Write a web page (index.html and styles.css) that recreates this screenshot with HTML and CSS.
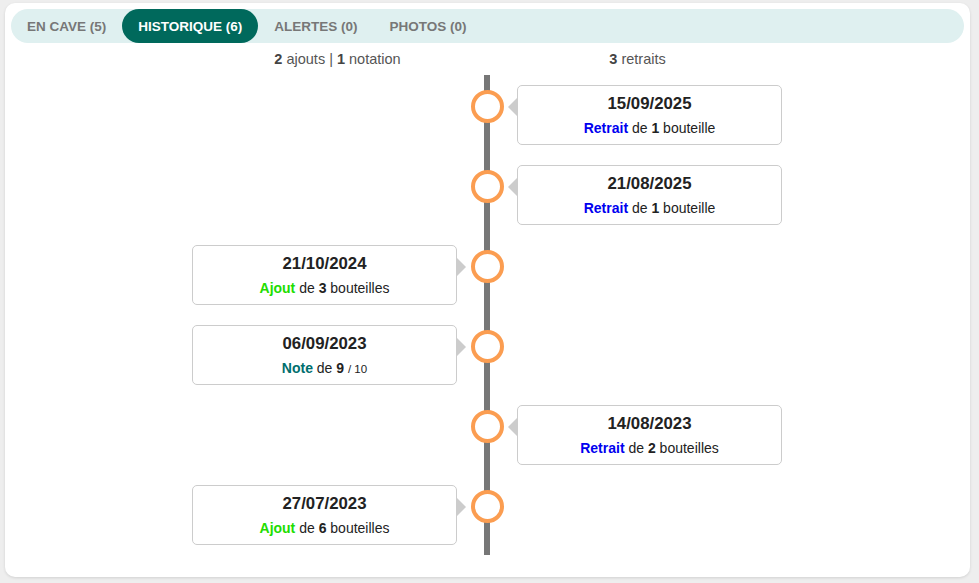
FILE: index.html
```html
<!DOCTYPE html>
<html>
<head>
    <meta charset="UTF-8" />
    <title>HISTORIQUE</title>
    <link rel="stylesheet" href="styles.css">
</head>
<body>
    <div class="panel">
      <div class="tabs">
        <a href="#">EN CAVE (5)</a>
        <a href="#" class="active">HISTORIQUE (6)</a>
        <a href="#">ALERTES (0)</a>
        <a href="#">PHOTOS (0)</a>
      </div>

      <div class="summary">
        <div><b>2</b> ajouts | <b>1</b> notation</div>
        <div><b>3</b> retraits</div>
      </div>

      <div class="timeline">
        <div class="item right">
          <div class="dot"></div>
          <div class="event">
            <div class="date">15/09/2025</div>
            <div class="what"><span class="out">Retrait</span> de <b>1</b> bouteille</div>
          </div>
        </div>
        <div class="item right">
          <div class="dot"></div>
          <div class="event">
            <div class="date">21/08/2025</div>
            <div class="what"><span class="out">Retrait</span> de <b>1</b> bouteille</div>
          </div>
        </div>
        <div class="item left">
          <div class="event">
            <div class="date">21/10/2024</div>
            <div class="what"><span class="in">Ajout</span> de <b>3</b> bouteilles</div>
          </div>
          <div class="dot"></div>
        </div>
        <div class="item left">
          <div class="event">
            <div class="date">06/09/2023</div>
            <div class="what"><span class="note">Note</span> de <b>9</b> <small>/ 10</small></div>
          </div>
          <div class="dot"></div>
        </div>
        <div class="item right">
          <div class="dot"></div>
          <div class="event">
            <div class="date">14/08/2023</div>
            <div class="what"><span class="out">Retrait</span> de <b>2</b> bouteilles</div>
          </div>
        </div>
        <div class="item left">
          <div class="event">
            <div class="date">27/07/2023</div>
            <div class="what"><span class="in">Ajout</span> de <b>6</b> bouteilles</div>
          </div>
          <div class="dot"></div>
        </div>
      </div>
    </div>
</body>
</html>
```

FILE: styles.css
```css
body {
  margin: 0;
  background-color: #eeeeee;
  font-family: "Liberation Sans", Arial, sans-serif;
  color: #222;
}

.panel {
  background-color: #fff;
  margin: 3px 9px 6px 5px;
  height: 574px;
  box-sizing: border-box;
  border-radius: 10px;
  box-shadow: 0 1px 3px rgba(0, 0, 0, 0.12);
  padding: 6px 7px 0 6px;
}

/* tabs */
.tabs {
  display: flex;
  background-color: #dff0f0;
  border-radius: 17px;
  height: 34px;
  margin-right: -1px;
}

.tabs a {
  display: flex;
  align-items: center;
  padding: 0 16px;
  border-radius: 17px;
  font-size: 13.5px;
  font-weight: bold;
  color: #777;
  text-decoration: none;
}

.tabs a.active {
  background-color: #00695c;
  color: #fff;
}

/* counts above the line */
.summary {
  display: flex;
  justify-content: center;
  font-size: 14.5px;
  color: #555;
  height: 32px;
  align-items: center;
  padding-left: 1px;
}

.summary div {
  width: 300px;
  text-align: center;
}

.summary b {
  color: #444;
}

/* timeline */
.timeline {
  width: 590px;
  margin: 0 auto;
  padding: 10px 0;
  background: linear-gradient(#777, #777) no-repeat center / 6px 100%;
}

.item {
  display: flex;
  align-items: flex-start;
  height: 60px;
  margin-bottom: 20px;
}

.item:last-child {
  margin-bottom: 0;
}

.item.right {
  padding-left: 279px;
}

.dot {
  width: 25px;
  height: 25px;
  border: 4px solid #fb9d51;
  border-radius: 50%;
  background-color: #fff;
  margin: 5px 14px 0 14px;
}

.item.right .dot {
  margin-left: 0;
  margin-right: 13px;
}

.item.left .dot {
  margin-right: 0;
}

.event {
  position: relative;
  width: 263px;
  height: 58px;
  border: 1px solid #ccc;
  border-radius: 5px;
  background-color: #fff;
  text-align: center;
}

.event::before {
  content: "";
  position: absolute;
  top: 12px;
  border-top: 9px solid transparent;
  border-bottom: 9px solid transparent;
}

.item.right .event::before {
  left: -10px;
  border-right: 9px solid #ccc;
}

.item.left .event::before {
  right: -10px;
  border-left: 9px solid #ccc;
}

.date {
  font-size: 16.8px;
  font-weight: bold;
  margin-top: 8px;
}

.what {
  font-size: 14px;
  margin-top: 6px;
}

.out {
  color: #0000f0;
  font-weight: bold;
}

.in {
  color: #22dd00;
  font-weight: bold;
}

.note {
  color: #006e6e;
  font-weight: bold;
}

small {
  font-size: 11.5px;
}
```
